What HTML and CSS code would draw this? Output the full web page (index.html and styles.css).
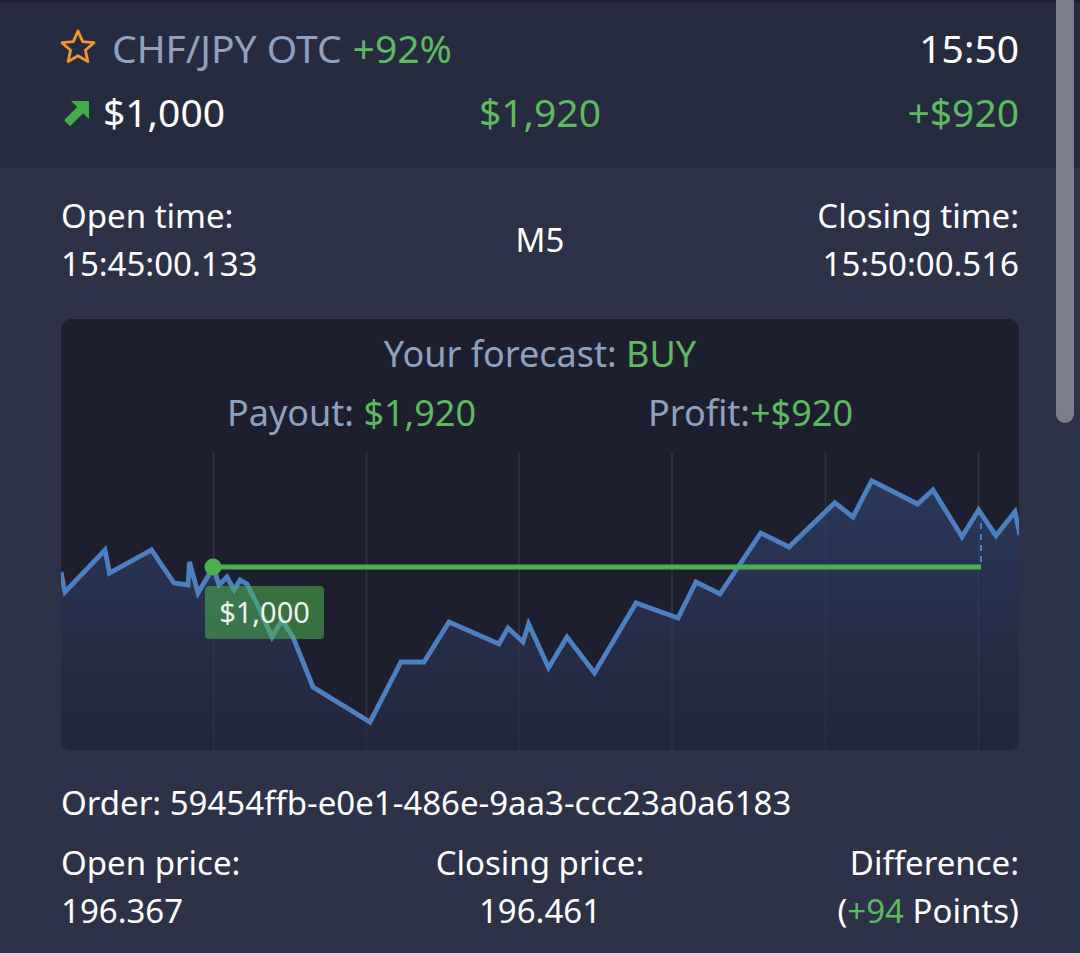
FILE: index.html
```html
<!DOCTYPE html>
<html lang="en">
<head>
  <meta charset="UTF-8">
  <title>Trade details</title>
  <link rel="stylesheet" href="styles.css">
</head>
<body>
  <div class="deal">
    <div class="deal-head">
      <div class="head-row">
        <div class="asset">
          <svg class="star" viewBox="0 0 36 36" width="36" height="36">
            <polygon points="18,2 22.7,12.6 34,13.7 25.4,21.3 27.9,32.6 18,26.7 8.1,32.6 10.6,21.3 2,13.7 13.3,12.6" fill="none" stroke="#f0962d" stroke-width="2.8" stroke-linejoin="round"/>
          </svg>
          <span class="asset-name">CHF/JPY OTC</span>
          <span class="green">+92%</span>
        </div>
        <div class="expiry">15:50</div>
      </div>
      <div class="head-row three">
        <div class="amount">
          <svg class="arrow" viewBox="0 0 26 26" width="26" height="26">
            <path d="M7 1H25V19L19.2 13.2L7.3 25.1Q6 26.4 4.7 25.1L1.2 21.6Q-0.1 20.3 1.2 19L13.1 7.1Z" fill="#43ad48"/>
          </svg>
          <span>$1,000</span>
        </div>
        <div class="center green">$1,920</div>
        <div class="right green">+$920</div>
      </div>
    </div>

    <div class="deal-body">
      <div class="info-grid times">
        <div>
          <div>Open time:</div>
          <div>15:45:00.133</div>
        </div>
        <div class="center">M5</div>
        <div class="right">
          <div>Closing time:</div>
          <div>15:50:00.516</div>
        </div>
      </div>

      <div class="chart">
        <div class="chart-text">
          <div class="forecast">Your forecast: <span class="green">BUY</span></div>
          <div class="results">
            <span>Payout: <span class="green">$1,920</span></span>
            <span>Profit:<span class="green">+$920</span></span>
          </div>
        </div>
        <svg class="plot" viewBox="0 0 959 305" width="959" height="305">
          <defs>
            <linearGradient id="area" x1="0" y1="0" x2="0" y2="1">
              <stop offset="0" stop-color="#30416a" stop-opacity="0.75"/>
              <stop offset="1" stop-color="#262b44" stop-opacity="0.6"/>
            </linearGradient>
          </defs>
          <g stroke="#2f3349" stroke-width="1.6">
            <line x1="152.5" y1="7" x2="152.5" y2="305"/>
            <line x1="305.5" y1="7" x2="305.5" y2="305"/>
            <line x1="458" y1="7" x2="458" y2="305"/>
            <line x1="611" y1="7" x2="611" y2="305"/>
            <line x1="764.5" y1="7" x2="764.5" y2="305"/>
            <line x1="917.6" y1="7" x2="917.6" y2="305"/>
          </g>
          <polygon fill="url(#area)" points="0,305 0,127 4,147 44,105 48.5,128 90.5,105 113,138 127,140 128.5,117 137,148 152.5,122 158,140 166,132 173,145 179,135 186,139 199,165 211,192 221,175 232,192 252,242 309,277 340,217 363,217 388,177 438,199 447,183 462,197 467.6,179 487.6,222.7 506,192 533.5,228 575,158 617,173 635,137 659,149 699.7,88 728,102 773.8,57.7 792,72 810.7,35.7 856.6,59 872,45 901,91.7 917.6,65 934.9,90.7 954,66.7 959,90 959,305"/>
          <polyline fill="none" stroke="#4c80c1" stroke-width="4.8" stroke-linejoin="miter" points="0,127 4,147 44,105 48.5,128 90.5,105 113,138 127,140 128.5,117 137,148 152.5,122 158,140 166,132 173,145 179,135 186,139 199,165 211,192 221,175 232,192 252,242 309,277 340,217 363,217 388,177 438,199 447,183 462,197 467.6,179 487.6,222.7 506,192 533.5,228 575,158 617,173 635,137 659,149 699.7,88 728,102 773.8,57.7 792,72 810.7,35.7 856.6,59 872,45 901,91.7 917.6,65 934.9,90.7 954,66.7 959,90"/>
          <line x1="920" y1="78" x2="920" y2="122" stroke="#4c80c1" stroke-width="2" stroke-dasharray="6 5"/>
          <line x1="152" y1="122" x2="920" y2="122" stroke="#4cb04e" stroke-width="5"/>
          <circle cx="152" cy="122" r="8.5" fill="#4cb04e"/>
          <rect x="144" y="141" width="119" height="53" rx="4" fill="#4cb04e" fill-opacity="0.55"/>
          <text class="bet-label" x="203.5" y="178" text-anchor="middle">$1,000</text>
        </svg>
      </div>

      <div class="order">Order: 59454ffb-e0e1-486e-9aa3-ccc23a0a6183</div>
      <div class="info-grid prices">
        <div>
          <div>Open price:</div>
          <div>196.367</div>
        </div>
        <div class="center">
          <div>Closing price:</div>
          <div>196.461</div>
        </div>
        <div class="right">
          <div>Difference:</div>
          <div>(<span class="green">+94</span> Points)</div>
        </div>
      </div>
    </div>

    <div class="scroll-thumb"></div>
  </div>
</body>
</html>
```

FILE: styles.css
```css
body {
  margin: 0;
  background-color: #2d3248;
  font-family: "Noto Sans", "Open Sans", sans-serif;
  color: #ffffff;
}

.deal {
  position: relative;
  width: 1080px;
  height: 953px;
  overflow: hidden;
}

.green {
  color: #5cba5f;
}

.center {
  text-align: center;
}

.right {
  text-align: right;
}

/* top summary */
.deal-head {
  background-color: #272b3f;
  border-top: 3px solid #1f2232;
  padding: 13px 61px 24px;
  height: 128px;
}

.head-row {
  display: flex;
  justify-content: space-between;
  align-items: center;
  font-size: 39px;
  line-height: 64px;
  height: 64px;
}

.head-row.three {
  display: grid;
  grid-template-columns: 1fr 1fr 1fr;
}

.asset {
  display: flex;
  align-items: center;
}

.star {
  margin: -2px 16px 0 -1px;
}

.asset-name {
  color: #8ea2c0;
  margin-right: 11px;
}

.amount {
  display: flex;
  align-items: center;
}

.arrow {
  margin: 2px 13px 0 3px;
}

/* details */
.deal-body {
  padding: 24px 61px 0;
  font-size: 33px;
  line-height: 48px;
}

.info-grid {
  display: grid;
  grid-template-columns: 1fr 1fr 1fr;
  align-items: center;
}

.chart {
  margin-top: 31px;
  height: 431px;
  background-color: #1d1f2e;
  border-radius: 10px;
  overflow: hidden;
  display: flex;
  flex-direction: column;
}

.chart-text {
  height: 126px;
  box-sizing: border-box;
  padding-top: 11px;
  color: #8ea2c0;
  font-size: 36px;
  text-align: center;
}

.results {
  display: flex;
  justify-content: center;
  gap: 172px;
  margin-top: 11px;
}

.plot {
  display: block;
}

.bet-label {
  font-family: "Noto Sans", sans-serif;
  font-size: 29px;
  fill: #eef3ee;
}

.order {
  margin-top: 29px;
}

.prices {
  margin-top: 12px;
}

.scroll-thumb {
  position: absolute;
  top: 0;
  left: 1056px;
  width: 18px;
  height: 423px;
  background-color: #7c7f8b;
  border-radius: 0 0 9px 9px;
}
```
